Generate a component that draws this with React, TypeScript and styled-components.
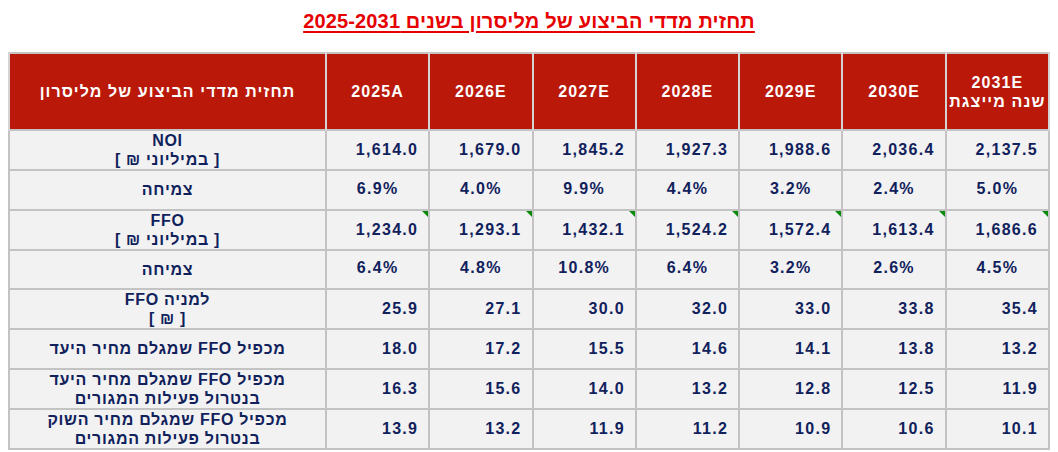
import styled, { createGlobalStyle } from "styled-components";

const GlobalStyle = createGlobalStyle`
  html, body {
    margin: 0;
    padding: 0;
    background: #ffffff;
  }
  body {
    font-family: "Liberation Sans", Arial, "Noto Sans", sans-serif;
  }
`;

type Row = {
  id: number;
  label: string[];
  values: string[];
  kind: "number" | "growth";
  marker?: boolean;
};

const years = [
  { id: 1, lines: ["2025A"] },
  { id: 2, lines: ["2026E"] },
  { id: 3, lines: ["2027E"] },
  { id: 4, lines: ["2028E"] },
  { id: 5, lines: ["2029E"] },
  { id: 6, lines: ["2030E"] },
  { id: 7, lines: ["2031E", "שנה מייצגת"] },
];

const rows: Row[] = [
  {
    id: 1,
    label: ["NOI", "[ במיליוני ₪ ]"],
    values: ["1,614.0", "1,679.0", "1,845.2", "1,927.3", "1,988.6", "2,036.4", "2,137.5"],
    kind: "number",
  },
  {
    id: 2,
    label: ["צמיחה"],
    values: ["6.9%", "4.0%", "9.9%", "4.4%", "3.2%", "2.4%", "5.0%"],
    kind: "growth",
  },
  {
    id: 3,
    label: ["FFO", "[ במיליוני ₪ ]"],
    values: ["1,234.0", "1,293.1", "1,432.1", "1,524.2", "1,572.4", "1,613.4", "1,686.6"],
    kind: "number",
    marker: true,
  },
  {
    id: 4,
    label: ["צמיחה"],
    values: ["6.4%", "4.8%", "10.8%", "6.4%", "3.2%", "2.6%", "4.5%"],
    kind: "growth",
  },
  {
    id: 5,
    label: ["למניה FFO", "[ ₪ ]"],
    values: ["25.9", "27.1", "30.0", "32.0", "33.0", "33.8", "35.4"],
    kind: "number",
  },
  {
    id: 6,
    label: ["מכפיל FFO שמגלם מחיר היעד"],
    values: ["18.0", "17.2", "15.5", "14.6", "14.1", "13.8", "13.2"],
    kind: "number",
  },
  {
    id: 7,
    label: ["מכפיל FFO שמגלם מחיר היעד", "בנטרול פעילות המגורים"],
    values: ["16.3", "15.6", "14.0", "13.2", "12.8", "12.5", "11.9"],
    kind: "number",
  },
  {
    id: 8,
    label: ["מכפיל FFO שמגלם מחיר השוק", "בנטרול פעילות המגורים"],
    values: ["13.9", "13.2", "11.9", "11.2", "10.9", "10.6", "10.1"],
    kind: "number",
  },
];

export default function App() {
  return (
    <>
      <GlobalStyle />
      <Page>
        <Title dir="rtl">תחזית מדדי הביצוע של מליסרון בשנים 2025-2031</Title>
        <Table>
          <colgroup>
            <col style={{ width: 317 }} />
            {years.map((y) => (
              <col key={y.id} />
            ))}
          </colgroup>
          <thead>
            <tr>
              <HeadCell dir="rtl">תחזית מדדי הביצוע של מליסרון</HeadCell>
              {years.map((y) => (
                <HeadCell key={y.id} dir="rtl">
                  {y.lines.map((line) => (
                    <Line key={line}>{line}</Line>
                  ))}
                </HeadCell>
              ))}
            </tr>
          </thead>
          <tbody>
            {rows.map((row) => (
              <BodyRow key={row.id}>
                <LabelCell dir="rtl">
                  {row.label.map((line) => (
                    <Line key={line}>{line}</Line>
                  ))}
                </LabelCell>
                {row.values.map((v, i) => (
                  <ValueCell key={i} $kind={row.kind}>
                    {row.marker && <Marker />}
                    {v}
                  </ValueCell>
                ))}
              </BodyRow>
            ))}
          </tbody>
        </Table>
      </Page>
    </>
  );
}

const Page = styled.div`
  width: 1058px;
  padding: 9px 8px 0 8px;
  box-sizing: border-box;
  display: flex;
  flex-direction: column;
  align-items: center;
`;

const Title = styled.h1`
  margin: 0 0 19px 0;
  font-size: 20px;
  line-height: 24px;
  font-weight: 700;
  letter-spacing: 0.15px;
  color: #e60000;
  text-decoration: underline;
  text-decoration-thickness: 2px;
  text-underline-offset: 3px;
`;

const Table = styled.table`
  width: 1042px;
  border-collapse: collapse;
  table-layout: fixed;
  border: 2px solid #c3c3c3;
`;

const HeadCell = styled.th`
  height: 75px;
  padding: 0 2px;
  background: #ba190a;
  color: #ffffff;
  font-size: 16px;
  font-weight: 700;
  letter-spacing: 1.1px;
  white-space: nowrap;
  text-align: center;
  vertical-align: middle;
  border-left: 2px solid #d4d4d4;
  border-right: 2px solid #d4d4d4;
  line-height: 19px;
`;

const Line = styled.div``;

const BodyRow = styled.tr`
  height: 39.6px;
`;

const LabelCell = styled.td`
  padding: 0 4px;
  background: #f2f2f2;
  color: #10215c;
  font-size: 16px;
  font-weight: 700;
  letter-spacing: 0.7px;
  line-height: 19px;
  white-space: nowrap;
  text-align: center;
  vertical-align: middle;
  border: 2px solid #c3c3c3;
`;

const ValueCell = styled.td<{ $kind: "number" | "growth" }>`
  position: relative;
  padding: ${(p) => (p.$kind === "growth" ? "0 4px 2px" : "0 10px 0 4px")};
  background: #f2f2f2;
  color: #10215c;
  font-size: 16px;
  font-weight: 700;
  letter-spacing: 1.3px;
  text-align: ${(p) => (p.$kind === "growth" ? "center" : "right")};
  vertical-align: middle;
  border: 2px solid #c3c3c3;
`;

const Marker = styled.span`
  position: absolute;
  top: 0;
  right: 0;
  width: 0;
  height: 0;
  border-top: 6px solid #0a8a0a;
  border-left: 6px solid transparent;
`;
